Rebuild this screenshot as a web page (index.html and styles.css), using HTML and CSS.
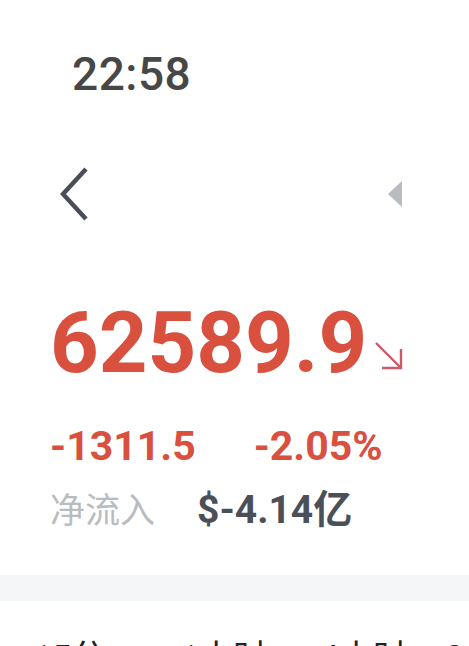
FILE: index.html
```html
<!DOCTYPE html>
<html lang="zh-CN">
<head>
    <meta charset="UTF-8">
    <meta name="viewport" content="width=device-width, initial-scale=1.0">
    <title>BTC</title>
    <link rel="stylesheet" href="styles.css">
</head>
<body>
    <div class="status-bar">
        <span class="clock">22:58</span>
    </div>

    <header class="top-nav">
        <svg class="back-icon" width="28" height="54" viewBox="0 0 28 54">
            <polyline points="26,2 3,27 26,52" fill="none" stroke="#4a4f57" stroke-width="4.5"/>
        </svg>
        <svg class="side-icon" width="14" height="26" viewBox="0 0 14 26">
            <polygon points="14,0 14,26 0,13" fill="#b8bcc1"/>
        </svg>
    </header>

    <section class="quote">
        <div class="price-row">
            <span class="price">62589.9</span>
            <svg class="trend-icon" width="30" height="30" viewBox="0 0 30 30">
                <polyline points="2,2 26,26" fill="none" stroke="#c95a68" stroke-width="2.4"/>
                <polyline points="27,8 27,27 8,27" fill="none" stroke="#c95a68" stroke-width="2.4"/>
            </svg>
        </div>
        <div class="change-row">
            <span class="change">-1311.5</span>
            <span class="change">-2.05%</span>
        </div>
        <div class="flow-row">
            <span class="flow-label">净流入</span>
            <span class="flow-value">$-4.14亿</span>
        </div>
    </section>

    <div class="divider"></div>

    <nav class="period-tabs">
        <span class="tab">15分</span>
        <span class="tab">1小时</span>
        <span class="tab">4小时</span>
        <span class="tab">24小时</span>
    </nav>
</body>
</html>
```

FILE: styles.css
```css
body {
    margin: 0;
    background: #ffffff;
    font-family: Roboto, "Noto Sans CJK SC", sans-serif;
    overflow: hidden;
}
.status-bar {
    padding: 51px 0 0 72px;
    height: 60px;
}
.clock {
    font-size: 46px;
    line-height: 46px;
    font-weight: 500;
    color: #474747;
    letter-spacing: 0.5px;
}
.top-nav {
    display: flex;
    justify-content: space-between;
    align-items: center;
    padding: 56px 67px 0 60px;
    height: 54px;
}
.back-icon,
.side-icon {
    display: block;
}
.quote {
    padding: 80px 0 0 50px;
}
.price-row {
    display: flex;
    align-items: flex-end;
    gap: 7px;
}
.price {
    font-size: 85px;
    line-height: 85px;
    font-weight: 700;
    color: #d9503f;
}
.trend-icon {
    margin-bottom: 15px;
}
.change-row {
    display: flex;
    gap: 58px;
    margin-top: 40px;
}
.change {
    font-size: 41px;
    line-height: 40px;
    font-weight: 700;
    color: #d9503f;
}
.flow-row {
    display: flex;
    align-items: baseline;
    gap: 42px;
    margin-top: 22px;
}
.flow-label {
    font-family: "Noto Sans CJK SC", sans-serif;
    font-size: 35px;
    line-height: 40px;
    color: #b8bcc0;
}
.flow-value {
    font-size: 39px;
    line-height: 40px;
    font-weight: 700;
    color: #4b5058;
}
.divider {
    height: 26px;
    background: #f5f6f7;
    margin-top: 45px;
}
.period-tabs {
    display: grid;
    grid-template-columns: 147px 140px 125px auto;
    padding: 36px 0 0 33px;
    white-space: nowrap;
}
.tab {
    font-size: 34px;
    line-height: 40px;
    color: #222222;
}
```
